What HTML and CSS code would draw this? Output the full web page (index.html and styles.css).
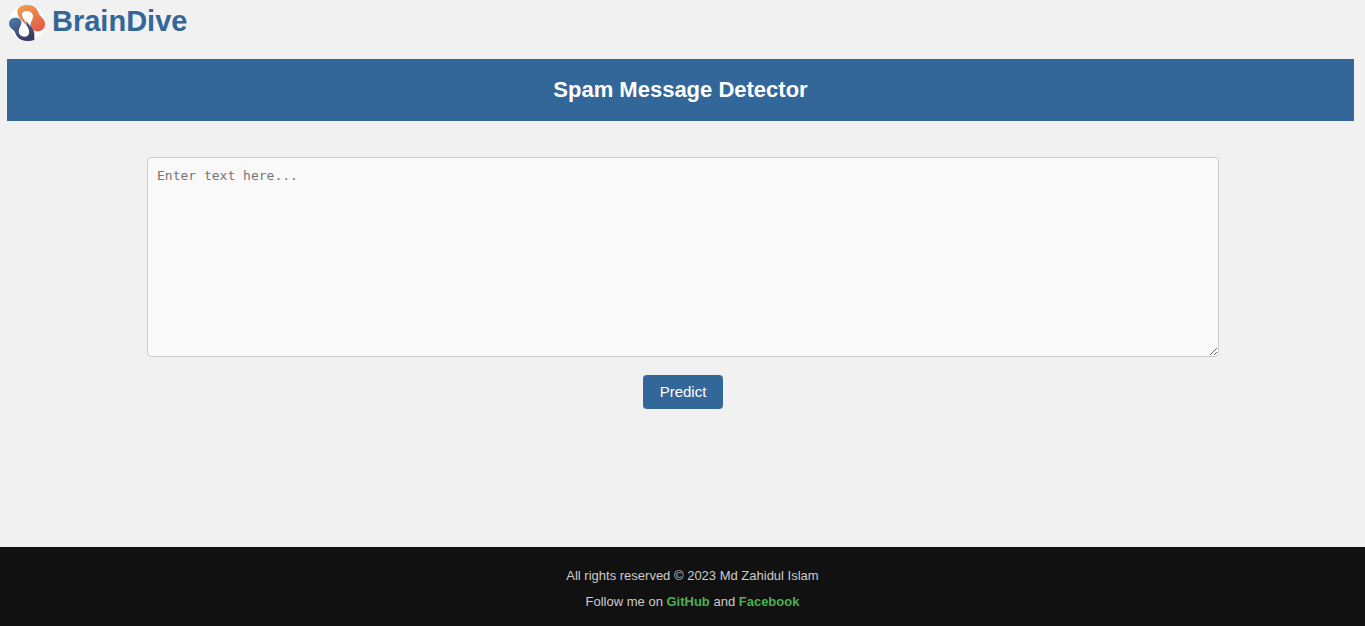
FILE: index.html
```html
<!DOCTYPE html>
<html lang="en">
<head>
<meta charset="utf-8">
<meta name="viewport" content="width=device-width, initial-scale=1">
<title>BrainDive</title>
<link rel="stylesheet" href="styles.css">
</head>
<body>
<header class="brand">
  <svg class="logo" viewBox="0 0 108 108" aria-hidden="true">
    <defs>
      <linearGradient id="warm" x1="0" y1="0" x2="0.6" y2="1"><stop offset="0" stop-color="#f0a050"/><stop offset="1" stop-color="#e4604a"/></linearGradient>
      <linearGradient id="cool" x1="0" y1="0" x2="0.4" y2="1"><stop offset="0" stop-color="#4a7fb0"/><stop offset="1" stop-color="#3a3a66"/></linearGradient>
    </defs>
    <circle cx="54" cy="54" r="54" fill="#fff"/>
    <path fill="url(#warm)" d="M56 66C50 55 25 40 25 20C25 7 38 0 54 0C74 0 85 10 90 26C94 36 108 40 108 58C108 71 99 79 86 79C73 79 64 70 64 60C64 52 72 45 72 34C72 24 63 18 53 18C42 18 37 25 40 34C43 44 55 56 56 66Z"/>
    <path fill="url(#cool)" d="M52 48C58 58 76 72 76 86L76 105C67 108 60 108 54 108C34 108 23 98 18 82C14 72 0 70 0 56C0 44 8 38 20 38C33 38 38 46 37 55C36 64 29 70 29 79C30 90 38 96 48 95C57 94 62 87 60 77C58 68 50 58 52 48Z"/>
  </svg>
  <h1 class="name">BrainDive</h1>
</header>
<main class="content">
  <h2 class="banner">Spam Message Detector</h2>
  <form class="form">
    <textarea class="message" aria-label="Message" placeholder="Enter text here..."></textarea>
    <button class="predict" type="button">Predict</button>
  </form>
</main>
<footer class="footer">
  <p class="line">All rights reserved © 2023 Md Zahidul Islam</p>
  <p class="line">Follow me on <a class="link" href="#github">GitHub</a> and <a class="link" href="#facebook">Facebook</a></p>
</footer>
</body>
</html>
```
FILE: styles.css
```css
* { box-sizing: border-box; }
body {
  margin: 0;
  min-height: 100vh;
  display: flex;
  flex-direction: column;
  background: #f1f1f1;
  font-family: "Liberation Sans", Arial, sans-serif;
}
.brand {
  display: flex;
  align-items: flex-start;
  gap: 7px;
  padding: 5px 9px 18px;
}
.logo { width: 36px; height: 36px; }
.name {
  margin: 0;
  color: #336699;
  font-size: 29px;
  line-height: 32px;
}
.content { flex: 1; }
.banner {
  margin: 0 11px 0 7px;
  padding: 15px;
  background: #336699;
  color: #fff;
  font-size: 22px;
  line-height: 32px;
  text-align: center;
}
.form {
  display: flex;
  flex-direction: column;
  align-items: center;
  gap: 18px;
  padding: 36px 146px 0 147px;
}
.message {
  width: 100%;
  height: 200px;
  padding: 10px 9px;
  border: 1px solid #ccc;
  border-radius: 4px;
  background: #f9f9f9;
  font: 13px "DejaVu Sans Mono", monospace;
  resize: both;
}
.message::placeholder { color: #757575; }
.predict {
  padding: 8px 17px 9px;
  border: 0;
  border-radius: 4px;
  background: #336699;
  color: #fff;
  font: 15px "Liberation Sans", Arial, sans-serif;
}
.footer {
  padding: 16px 0 12px 20px;
  background: #111;
  color: #ccc;
  font-size: 13px;
  text-align: center;
}
.line { margin: 0; line-height: 26px; }
.line:last-child { line-height: 25px; }
.link { color: #4caf50; font-weight: bold; text-decoration: none; }
```
